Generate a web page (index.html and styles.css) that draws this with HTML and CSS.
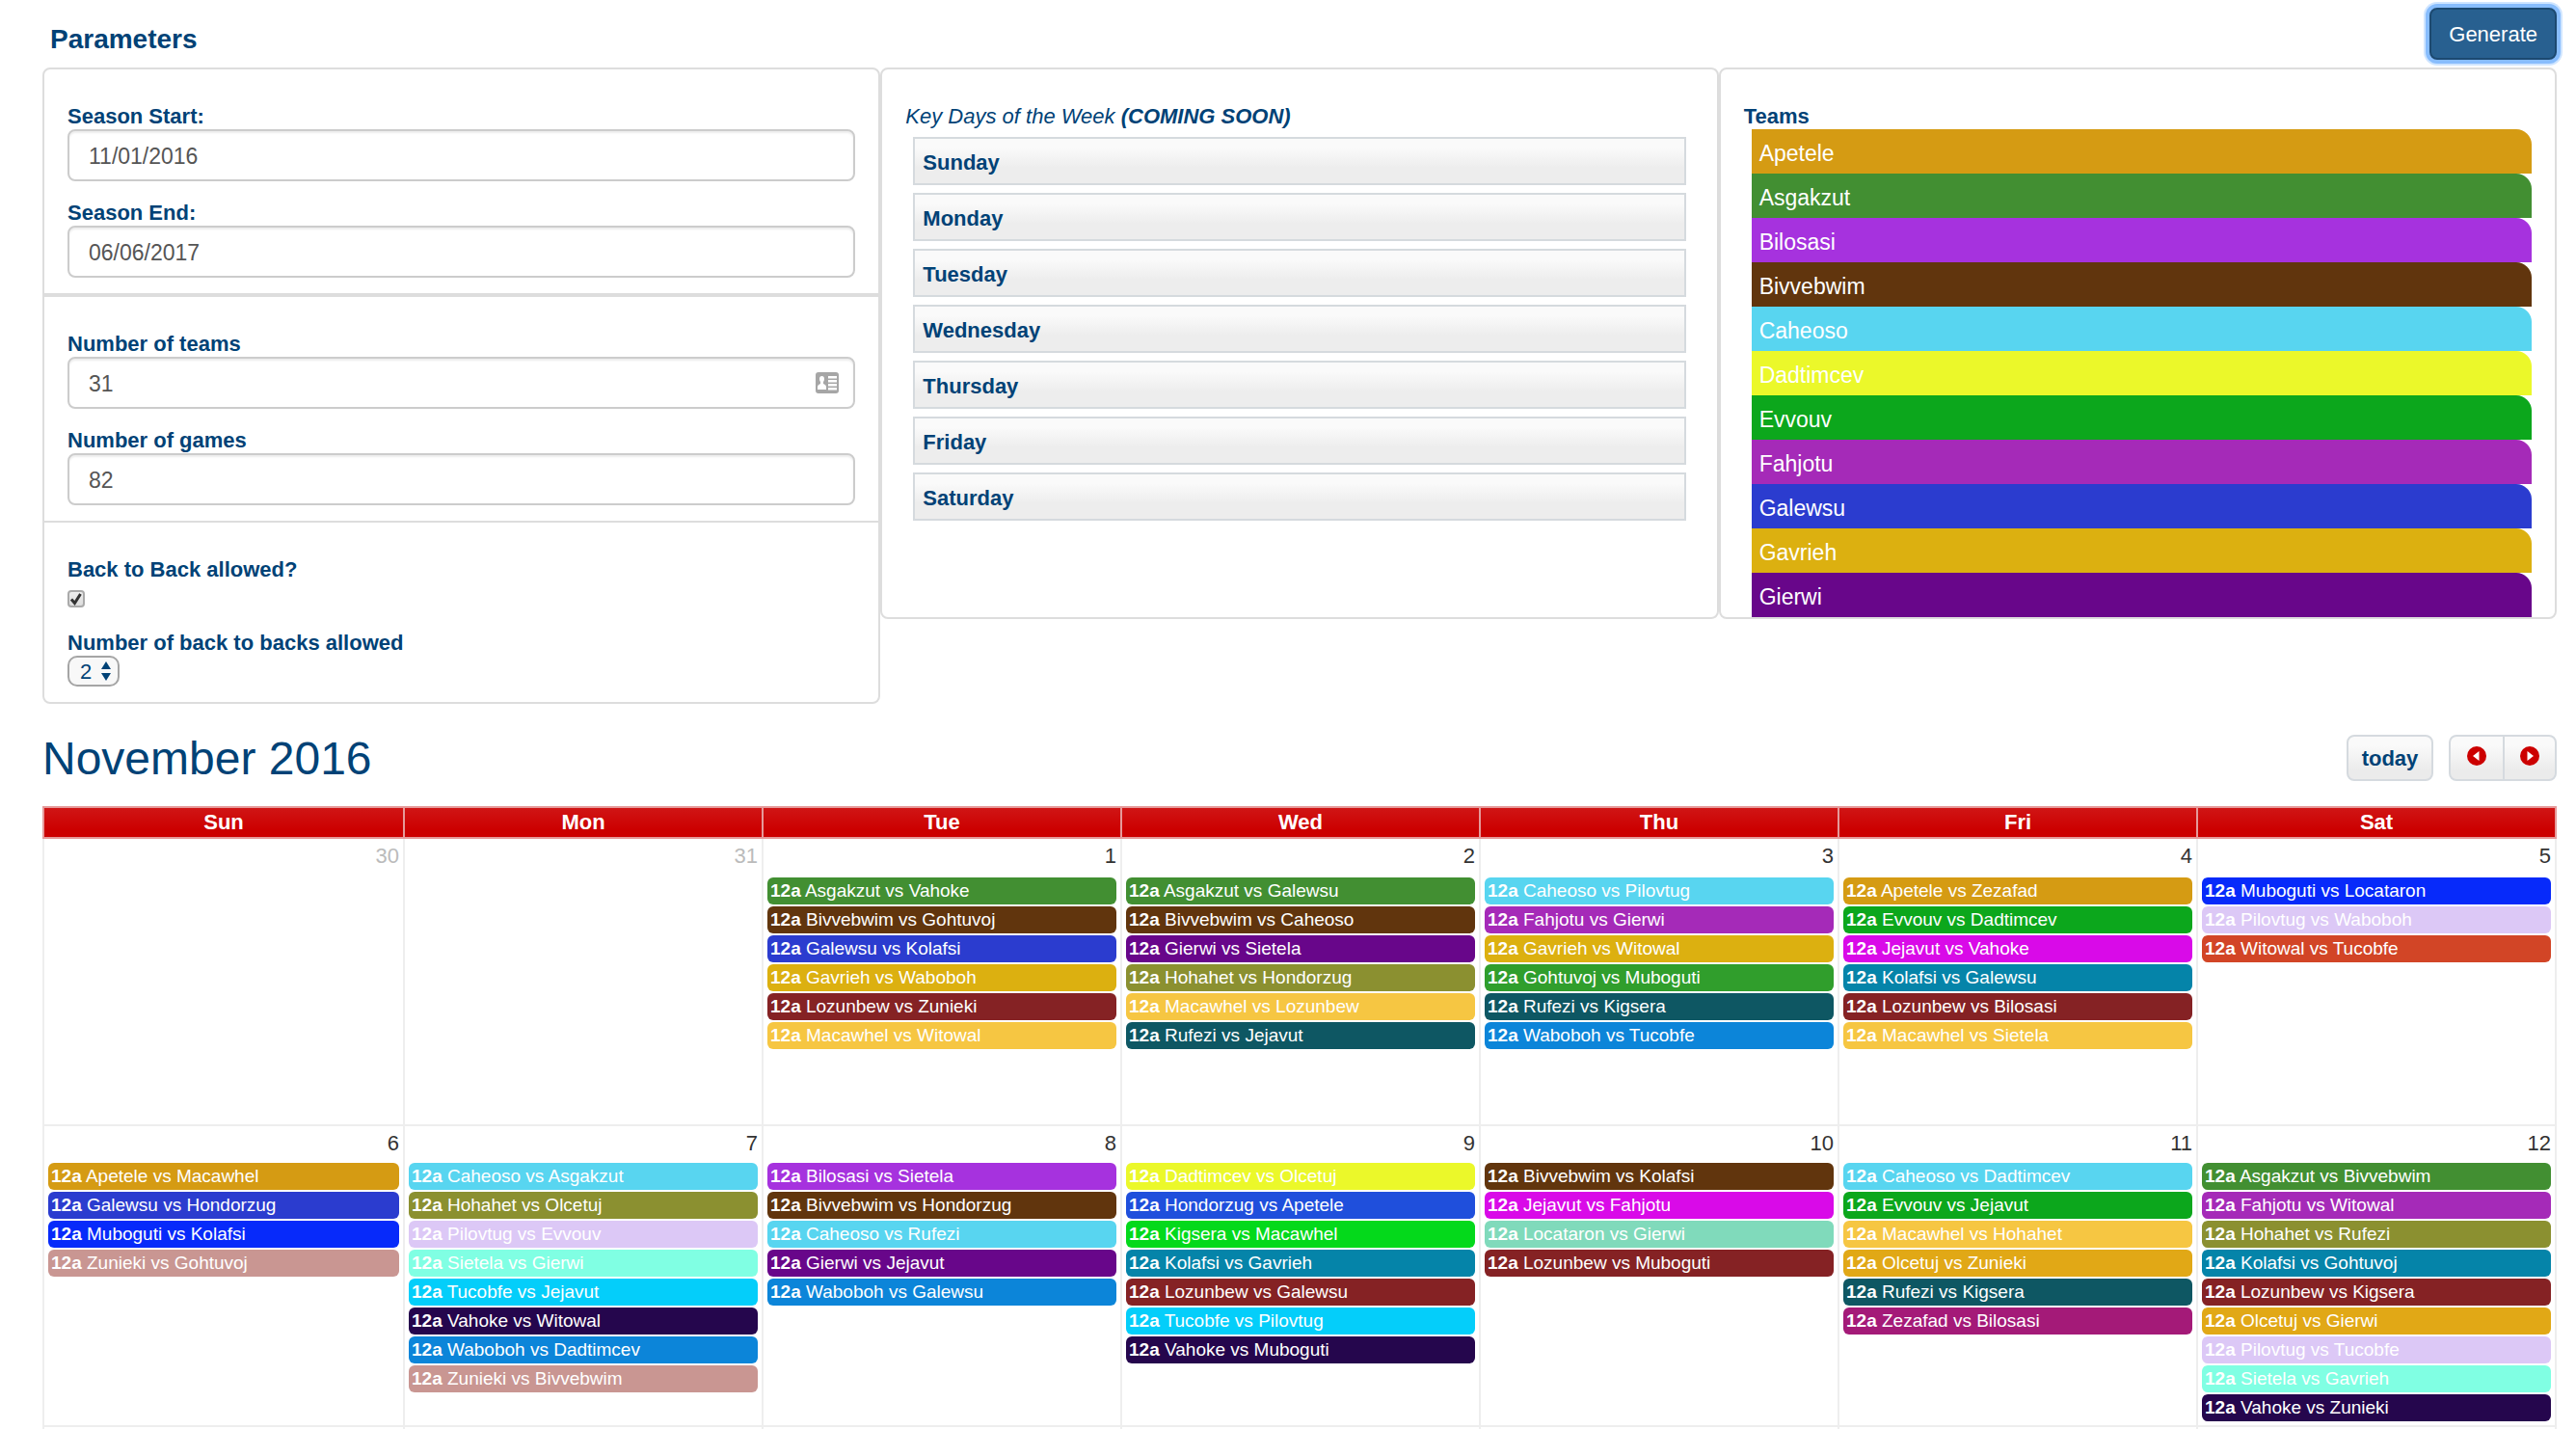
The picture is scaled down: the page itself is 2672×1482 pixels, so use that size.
FILE: index.html
```html
<!DOCTYPE html>
<html lang="en">
<head>
<meta charset="utf-8">
<title>Season schedule</title>
<link rel="stylesheet" href="styles.css">
</head>
<body>
<main class="page">
  <header class="topbar">
    <h1 class="heading">Parameters</h1>
    <button class="generate" type="button">Generate</button>
  </header>

  <form class="parameters">
    <div class="column">
      <section class="panel">
        <label class="label" for="start">Season Start:</label>
        <input class="field" id="start" type="text" value="11/01/2016">
        <label class="label spaced" for="end">Season End:</label>
        <input class="field" id="end" type="text" value="06/06/2017">
      </section>
      <section class="panel">
        <label class="label" for="teams">Number of teams</label>
        <div class="field-wrap">
          <input class="field" id="teams" type="text" value="31">
          <svg class="card-icon" width="24" height="22" viewBox="0 0 24 22" aria-hidden="true">
            <rect width="24" height="22" rx="3" fill="#a6a6a6"/>
            <path d="M2 18v-3q0-2 3-3V10q-1-1-1-3 0-3 2.500-3t2.500 3q0 2-1 3v2q3 1 3 3v3z" fill="#fff"/>
            <path d="M13 4h9v2.500h-9zM13 8h9v2.500h-9zM13 12h9v2.500h-9zM13 16h9v2.500h-9z" fill="#fff"/>
          </svg>
        </div>
        <label class="label spaced" for="games">Number of games</label>
        <input class="field" id="games" type="text" value="82">
      </section>
      <section class="panel joined">
        <label class="label" for="b2b">Back to Back allowed?</label>
        <div class="check-wrap">
          <input class="check" id="b2b" type="checkbox" checked>
          <svg class="check-mark" width="18" height="18" viewBox="0 0 18 18" aria-hidden="true"><path d="M4 9.500l3.500 4L13.500 4" fill="none" stroke="#333" stroke-width="3"/></svg>
        </div>
        <label class="label after-check" for="b2bcount">Number of back to backs allowed</label>
        <div class="select-wrap">
          <select class="select" id="b2bcount"><option>2</option></select>
          <svg class="select-arrows" width="10" height="20" viewBox="0 0 10 20" aria-hidden="true"><path d="M5 0l5 8H0zM5 20l5-8H0z" fill="#004276"/></svg>
        </div>
      </section>
    </div>

    <section class="panel tall">
      <p class="label key-label">Key Days of the Week <b>(COMING SOON)</b></p>
      <ul class="days">
        <li class="day">Sunday</li>
        <li class="day">Monday</li>
        <li class="day">Tuesday</li>
        <li class="day">Wednesday</li>
        <li class="day">Thursday</li>
        <li class="day">Friday</li>
        <li class="day">Saturday</li>
      </ul>
    </section>

    <section class="panel tall">
      <h2 class="label">Teams</h2>
      <ul class="teams">
        <li class="team apetele">Apetele</li>
        <li class="team asgakzut">Asgakzut</li>
        <li class="team bilosasi">Bilosasi</li>
        <li class="team bivvebwim">Bivvebwim</li>
        <li class="team caheoso">Caheoso</li>
        <li class="team dadtimcev">Dadtimcev</li>
        <li class="team evvouv">Evvouv</li>
        <li class="team fahjotu">Fahjotu</li>
        <li class="team galewsu">Galewsu</li>
        <li class="team gavrieh">Gavrieh</li>
        <li class="team gierwi">Gierwi</li>
      </ul>
    </section>
  </form>

  <div class="toolbar">
    <h2 class="month">November 2016</h2>
    <div class="nav">
      <button class="nav-button today" type="button">today</button>
      <div class="nav-group">
        <button class="nav-button arrow" type="button" aria-label="Previous month"><svg width="20" height="20" viewBox="0 0 20 20"><circle cx="10" cy="10" r="10" fill="#c00"/><path d="M12.500 5v10L6 10z" fill="#fff"/></svg></button>
        <button class="nav-button arrow" type="button" aria-label="Next month"><svg width="20" height="20" viewBox="0 0 20 20"><circle cx="10" cy="10" r="10" fill="#c00"/><path d="M7.500 5v10L14 10z" fill="#fff"/></svg></button>
      </div>
    </div>
  </div>

  <table class="calendar">
    <thead>
      <tr><th>Sun</th><th>Mon</th><th>Tue</th><th>Wed</th><th>Thu</th><th>Fri</th><th>Sat</th></tr>
    </thead>
    <tbody>
      <tr class="week first">
        <td class="other"><div class="date">30</div></td>
        <td class="other"><div class="date">31</div></td>
        <td><div class="date">1</div>
          <div class="events">
            <a class="event asgakzut" href="#"><b>12a</b> Asgakzut vs Vahoke</a>
            <a class="event bivvebwim" href="#"><b>12a</b> Bivvebwim vs Gohtuvoj</a>
            <a class="event galewsu" href="#"><b>12a</b> Galewsu vs Kolafsi</a>
            <a class="event gavrieh" href="#"><b>12a</b> Gavrieh vs Waboboh</a>
            <a class="event lozunbew" href="#"><b>12a</b> Lozunbew vs Zunieki</a>
            <a class="event macawhel" href="#"><b>12a</b> Macawhel vs Witowal</a>
          </div></td>
        <td><div class="date">2</div>
          <div class="events">
            <a class="event asgakzut" href="#"><b>12a</b> Asgakzut vs Galewsu</a>
            <a class="event bivvebwim" href="#"><b>12a</b> Bivvebwim vs Caheoso</a>
            <a class="event gierwi" href="#"><b>12a</b> Gierwi vs Sietela</a>
            <a class="event hohahet" href="#"><b>12a</b> Hohahet vs Hondorzug</a>
            <a class="event macawhel" href="#"><b>12a</b> Macawhel vs Lozunbew</a>
            <a class="event rufezi" href="#"><b>12a</b> Rufezi vs Jejavut</a>
          </div></td>
        <td><div class="date">3</div>
          <div class="events">
            <a class="event caheoso" href="#"><b>12a</b> Caheoso vs Pilovtug</a>
            <a class="event fahjotu" href="#"><b>12a</b> Fahjotu vs Gierwi</a>
            <a class="event gavrieh" href="#"><b>12a</b> Gavrieh vs Witowal</a>
            <a class="event gohtuvoj" href="#"><b>12a</b> Gohtuvoj vs Muboguti</a>
            <a class="event rufezi" href="#"><b>12a</b> Rufezi vs Kigsera</a>
            <a class="event waboboh" href="#"><b>12a</b> Waboboh vs Tucobfe</a>
          </div></td>
        <td><div class="date">4</div>
          <div class="events">
            <a class="event apetele" href="#"><b>12a</b> Apetele vs Zezafad</a>
            <a class="event evvouv" href="#"><b>12a</b> Evvouv vs Dadtimcev</a>
            <a class="event jejavut" href="#"><b>12a</b> Jejavut vs Vahoke</a>
            <a class="event kolafsi" href="#"><b>12a</b> Kolafsi vs Galewsu</a>
            <a class="event lozunbew" href="#"><b>12a</b> Lozunbew vs Bilosasi</a>
            <a class="event macawhel" href="#"><b>12a</b> Macawhel vs Sietela</a>
          </div></td>
        <td><div class="date">5</div>
          <div class="events">
            <a class="event muboguti" href="#"><b>12a</b> Muboguti vs Locataron</a>
            <a class="event pilovtug" href="#"><b>12a</b> Pilovtug vs Waboboh</a>
            <a class="event witowal" href="#"><b>12a</b> Witowal vs Tucobfe</a>
          </div></td>
      </tr>
      <tr class="week">
        <td><div class="date">6</div>
          <div class="events">
            <a class="event apetele" href="#"><b>12a</b> Apetele vs Macawhel</a>
            <a class="event galewsu" href="#"><b>12a</b> Galewsu vs Hondorzug</a>
            <a class="event muboguti" href="#"><b>12a</b> Muboguti vs Kolafsi</a>
            <a class="event zunieki" href="#"><b>12a</b> Zunieki vs Gohtuvoj</a>
          </div></td>
        <td><div class="date">7</div>
          <div class="events">
            <a class="event caheoso" href="#"><b>12a</b> Caheoso vs Asgakzut</a>
            <a class="event hohahet" href="#"><b>12a</b> Hohahet vs Olcetuj</a>
            <a class="event pilovtug" href="#"><b>12a</b> Pilovtug vs Evvouv</a>
            <a class="event sietela" href="#"><b>12a</b> Sietela vs Gierwi</a>
            <a class="event tucobfe" href="#"><b>12a</b> Tucobfe vs Jejavut</a>
            <a class="event vahoke" href="#"><b>12a</b> Vahoke vs Witowal</a>
            <a class="event waboboh" href="#"><b>12a</b> Waboboh vs Dadtimcev</a>
            <a class="event zunieki" href="#"><b>12a</b> Zunieki vs Bivvebwim</a>
          </div></td>
        <td><div class="date">8</div>
          <div class="events">
            <a class="event bilosasi" href="#"><b>12a</b> Bilosasi vs Sietela</a>
            <a class="event bivvebwim" href="#"><b>12a</b> Bivvebwim vs Hondorzug</a>
            <a class="event caheoso" href="#"><b>12a</b> Caheoso vs Rufezi</a>
            <a class="event gierwi" href="#"><b>12a</b> Gierwi vs Jejavut</a>
            <a class="event waboboh" href="#"><b>12a</b> Waboboh vs Galewsu</a>
          </div></td>
        <td><div class="date">9</div>
          <div class="events">
            <a class="event dadtimcev" href="#"><b>12a</b> Dadtimcev vs Olcetuj</a>
            <a class="event hondorzug" href="#"><b>12a</b> Hondorzug vs Apetele</a>
            <a class="event kigsera" href="#"><b>12a</b> Kigsera vs Macawhel</a>
            <a class="event kolafsi" href="#"><b>12a</b> Kolafsi vs Gavrieh</a>
            <a class="event lozunbew" href="#"><b>12a</b> Lozunbew vs Galewsu</a>
            <a class="event tucobfe" href="#"><b>12a</b> Tucobfe vs Pilovtug</a>
            <a class="event vahoke" href="#"><b>12a</b> Vahoke vs Muboguti</a>
          </div></td>
        <td><div class="date">10</div>
          <div class="events">
            <a class="event bivvebwim" href="#"><b>12a</b> Bivvebwim vs Kolafsi</a>
            <a class="event jejavut" href="#"><b>12a</b> Jejavut vs Fahjotu</a>
            <a class="event locataron" href="#"><b>12a</b> Locataron vs Gierwi</a>
            <a class="event lozunbew" href="#"><b>12a</b> Lozunbew vs Muboguti</a>
          </div></td>
        <td><div class="date">11</div>
          <div class="events">
            <a class="event caheoso" href="#"><b>12a</b> Caheoso vs Dadtimcev</a>
            <a class="event evvouv" href="#"><b>12a</b> Evvouv vs Jejavut</a>
            <a class="event macawhel" href="#"><b>12a</b> Macawhel vs Hohahet</a>
            <a class="event olcetuj" href="#"><b>12a</b> Olcetuj vs Zunieki</a>
            <a class="event rufezi" href="#"><b>12a</b> Rufezi vs Kigsera</a>
            <a class="event zezafad" href="#"><b>12a</b> Zezafad vs Bilosasi</a>
          </div></td>
        <td><div class="date">12</div>
          <div class="events">
            <a class="event asgakzut" href="#"><b>12a</b> Asgakzut vs Bivvebwim</a>
            <a class="event fahjotu" href="#"><b>12a</b> Fahjotu vs Witowal</a>
            <a class="event hohahet" href="#"><b>12a</b> Hohahet vs Rufezi</a>
            <a class="event kolafsi" href="#"><b>12a</b> Kolafsi vs Gohtuvoj</a>
            <a class="event lozunbew" href="#"><b>12a</b> Lozunbew vs Kigsera</a>
            <a class="event olcetuj" href="#"><b>12a</b> Olcetuj vs Gierwi</a>
            <a class="event pilovtug" href="#"><b>12a</b> Pilovtug vs Tucobfe</a>
            <a class="event sietela" href="#"><b>12a</b> Sietela vs Gavrieh</a>
            <a class="event vahoke" href="#"><b>12a</b> Vahoke vs Zunieki</a>
          </div></td>
      </tr>
      <tr class="week next"><td></td><td></td><td></td><td></td><td></td><td></td><td></td></tr>
    </tbody>
  </table>
</main>
</body>
</html>
```
FILE: styles.css
```css
* { box-sizing: border-box; }

body {
  margin: 0;
  background: #fff;
  color: #004276;
  font-family: "Liberation Sans", Arial, Helvetica, sans-serif;
  font-size: 22px;
}

button, input, select { font-family: inherit; }
ul { list-style: none; margin: 0; padding: 0; }

.page { padding: 8px 20px 0 44px; }

/* Top bar */
.topbar {
  display: flex;
  justify-content: space-between;
  align-items: flex-start;
  height: 62px;
}
.heading {
  margin: 0;
  padding: 16px 0 0 8px;
  font-size: 28px;
  line-height: 34px;
}
.generate {
  height: 54px;
  padding: 2px 18px 0;
  border: 2px solid #1c4970;
  border-radius: 8px;
  background: #286090;
  box-shadow: 0 0 0 4px #88bdfd, 0 0 0 6px #cfe5ff;
  color: #fff;
  font-size: 22px;
}

/* Parameter panels */
.parameters {
  display: grid;
  grid-template-columns: repeat(3, 1fr);
  align-items: start;
}
.panel {
  padding: 36px 24px 16px;
  border: 2px solid #ddd;
  border-radius: 8px;
}
.column .panel { border-radius: 0; }
.column .panel:first-child { border-radius: 8px 8px 0 0; }
.column .panel.joined {
  margin-top: -2px;
  border-radius: 0 0 8px 8px;
}
.panel.tall {
  height: 572px;
  padding-bottom: 0;
  overflow: hidden;
}
.label {
  display: block;
  margin: 0;
  font-size: 22px;
  font-weight: bold;
  line-height: 26px;
}
.label.spaced { margin-top: 20px; }
.field {
  display: block;
  width: 100%;
  height: 54px;
  padding: 2px 20px 0;
  border: 2px solid #ccc;
  border-radius: 8px;
  background: #fff;
  box-shadow: inset 0 2px 2px rgba(0, 0, 0, .075);
  color: #555;
  font-size: 23px;
}
.field-wrap, .check-wrap, .select-wrap { position: relative; }
.card-icon { position: absolute; right: 17px; top: 16px; }

.check-wrap { padding-top: 8px; height: 26px; }
.check {
  display: block;
  width: 18px;
  height: 18px;
  margin: 0;
  appearance: none;
  border: 2px solid #aaa;
  border-radius: 4px;
  background: linear-gradient(#eee, #ddd);
}
.check-mark { position: absolute; left: 0; top: 8px; }
.label.after-check { margin-top: 24px; }

.select-wrap { width: 54px; }
.select {
  display: block;
  width: 100%;
  height: 32px;
  padding: 0 0 0 11px;
  appearance: none;
  border: 2px solid #a5a5a5;
  border-radius: 10px;
  background: #f8f8f8;
  color: #004276;
  font-size: 22px;
}
.select-arrows { position: absolute; right: 9px; top: 6px; }

.key-label { font-style: italic; font-weight: normal; }
.days {
  display: grid;
  gap: 8px;
  padding: 8px 8px 0;
}
.day {
  height: 50px;
  padding: 0 8px;
  border: 2px solid #d5dade;
  background: linear-gradient(#fafafa 20%, #ededed 65%);
  font-weight: bold;
  line-height: 50px;
}
.teams { padding-left: 8px; }
.team {
  height: 46px;
  padding: 0 8px;
  border-top-right-radius: 16px;
  color: #fff;
  font-size: 23px;
  line-height: 50px;
}

/* Calendar toolbar */
.toolbar {
  display: flex;
  justify-content: space-between;
  align-items: center;
  margin: 32px 0 26px;
}
.month {
  margin: 0;
  padding-top: 2px;
  font-size: 48px;
  font-weight: normal;
  line-height: 46px;
}
.nav { display: flex; gap: 16px; }
.nav-group { display: flex; }
.nav-button {
  height: 48px;
  border: 2px solid #d5dadf;
  border-radius: 8px;
  background: linear-gradient(#fafafa 20%, #ebebeb 80%);
  color: #004276;
  font-size: 22px;
  font-weight: bold;
}
.today { width: 90px; padding: 2px 0 0; }
.arrow {
  display: flex;
  justify-content: center;
  width: 58px;
  padding: 10px 0 0;
}
.arrow:first-child { border-radius: 8px 0 0 8px; }
.arrow + .arrow { width: 56px; margin-left: -2px; border-radius: 0 8px 8px 0; }

/* Calendar grid */
.calendar {
  width: 100%;
  table-layout: fixed;
  border-spacing: 0;
  border: solid #eee;
  border-width: 0 2px;
}
.calendar th {
  height: 34px;
  padding: 0;
  border: solid #e59a9a;
  border-width: 2px 0 2px 2px;
  background: linear-gradient(#d01515, #c00 75%);
  color: #fff;
  font-size: 22px;
  line-height: 30px;
}
.calendar th:first-child { border-left: 0; box-shadow: -2px 0 0 #e59a9a; }
.calendar th:last-child { box-shadow: 2px 0 0 #e59a9a; }
.calendar td {
  padding: 0 4px;
  border: solid #eee;
  border-width: 2px 0 0 2px;
  vertical-align: top;
}
.calendar td:first-child { border-left: 0; }
.calendar .first td { height: 296px; border-top: 0; }
.first .events { padding-top: 8px; }
.next td { height: 4px; }
.date {
  padding-top: 4px;
  color: #333;
  line-height: 28px;
  text-align: right;
}
.other .date { color: #bbb; }
.events {
  display: grid;
  gap: 2px;
  padding: 6px 0 4px;
}
.event {
  height: 28px;
  padding: 0 3px;
  border-radius: 6px;
  color: #fff;
  font-size: 19px;
  line-height: 28px;
  text-decoration: none;
  white-space: nowrap;
  overflow: hidden;
}

/* Team colours */
.apetele { background: #d59b13; }
.asgakzut { background: #428f32; }
.bilosasi { background: #a632de; }
.bivvebwim { background: #61350d; }
.caheoso { background: #58d5f0; }
.dadtimcev { background: #ebf82a; }
.evvouv { background: #0ca71c; }
.fahjotu { background: #a52ab8; }
.galewsu { background: #2b3ccf; }
.gavrieh { background: #dcb010; }
.gierwi { background: #68068a; }
.gohtuvoj { background: #309e2c; }
.hohahet { background: #8b9030; }
.hondorzug { background: #1f4fdc; }
.jejavut { background: #d90ae8; }
.kigsera { background: #04d91b; }
.kolafsi { background: #0584a9; }
.locataron { background: #80dabb; }
.lozunbew { background: #852224; }
.macawhel { background: #f6c642; }
.muboguti { background: #072afa; }
.olcetuj { background: #e1a816; }
.pilovtug { background: #dcc8f6; }
.rufezi { background: #0e5763; }
.sietela { background: #80ffe3; }
.tucobfe { background: #04cefa; }
.vahoke { background: #25064d; }
.waboboh { background: #0c85d9; }
.witowal { background: #d24526; }
.zezafad { background: #a41a78; }
.zunieki { background: #c99692; }
```
